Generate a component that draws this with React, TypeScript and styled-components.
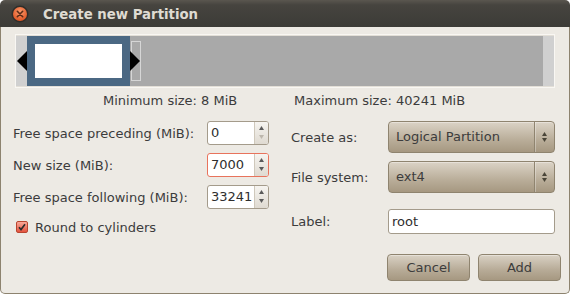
import React from "react";
import styled, { createGlobalStyle } from "styled-components";

const GlobalStyle = createGlobalStyle`
  html, body {
    margin: 0;
    padding: 0;
    background: #ffffff;
  }
  body {
    font-family: "DejaVu Sans", "Liberation Sans", sans-serif;
    font-size: 13px;
    color: #3c3c3c;
  }
`;

const Window = styled.div`
  width: 570px;
  height: 294px;
  display: flex;
  flex-direction: column;
`;

const TitleBar = styled.div`
  height: 27px;
  flex: none;
  display: flex;
  align-items: center;
  gap: 14px;
  padding-left: 11px;
  background: linear-gradient(#5a564f 0, #46443f 5px, #3c3b37 100%);
  border-radius: 5px 5px 0 0;
`;

const Title = styled.span`
  font-weight: bold;
  font-size: 13.3px;
  color: #dfdbd2;
  padding-top: 1px;
`;

const Body = styled.div`
  flex: 1;
  display: flex;
  flex-direction: column;
  padding-top: 7px;
  background: #edeae4;
  border: 1px solid #8d836f;
  border-top: none;
  border-radius: 0 0 5px 5px;
`;

const Frame = styled.div`
  margin: 0 14px;
  height: 54px;
  box-sizing: border-box;
  border: 1px solid #f9f7f3;
  padding: 1px 1px 1px 0;
  background: #e3dfd7;
`;

const SizesRow = styled.div`
  display: flex;
  margin-top: 5px;
  padding-left: 102px;
  line-height: 16px;
`;

const SizeText = styled.span<{ $width?: number }>`
  width: ${(p) => (p.$width ? `${p.$width}px` : "auto")};
`;

const Columns = styled.div`
  display: grid;
  grid-template-columns: 278px 1fr;
  margin-top: 12px;
  padding-left: 12px;
`;

const LeftGrid = styled.div`
  display: grid;
  grid-template-columns: 194px 62px;
  grid-auto-rows: 24px;
  row-gap: 8px;
  align-content: start;
`;

const RightGrid = styled.div`
  display: grid;
  grid-template-columns: 97px 167px;
  row-gap: 8px;
  align-content: start;
`;

const Label = styled.label<{ $offset?: number }>`
  align-self: center;
  white-space: nowrap;
  margin-top: ${(p) => p.$offset ?? 0}px;
`;

const Spin = styled.div<{ $focus?: boolean }>`
  display: flex;
  box-sizing: border-box;
  height: 24px;
  background: #ffffff;
  border: 1px solid ${(p) => (p.$focus ? "#e8735c" : "#a49b8b")};
  border-radius: 3px;
  overflow: hidden;
`;

const SpinValue = styled.span`
  flex: 1;
  padding-left: 3px;
  line-height: 22px;
  color: #2e2e2e;
`;

const SpinButtons = styled.div`
  width: 13px;
  display: flex;
  align-items: center;
  justify-content: center;
  background: linear-gradient(#f6f4f0, #dfdad1);
  border-left: 1px solid #cfc8bb;
`;

const CheckRow = styled.div`
  grid-column: 1 / span 2;
  display: flex;
  align-items: center;
  gap: 7px;
  padding-left: 3px;
  margin-top: -4px;
`;

const CheckBox = styled.span`
  width: 12px;
  height: 12px;
  box-sizing: border-box;
  display: flex;
  align-items: center;
  justify-content: center;
  border: 1px solid #b9452f;
  border-radius: 2px;
  background: linear-gradient(#f9a999, #e4543f);
`;

const Combo = styled.div`
  display: flex;
  box-sizing: border-box;
  height: 32px;
  border: 1px solid #8f846f;
  border-radius: 4px;
  background: linear-gradient(#dbd3c6, #b9ad99 60%, #a69881);
  box-shadow: inset 0 1px 0 rgba(255, 255, 255, 0.35);
`;

const ComboValue = styled.span`
  flex: 1;
  padding-left: 7px;
  line-height: 30px;
  color: #3c3c3c;
`;

const ComboArrows = styled.div`
  width: 19px;
  display: flex;
  align-items: center;
  justify-content: center;
  border-left: 1px solid #8f846f;
  box-shadow: inset 1px 0 0 rgba(255, 255, 255, 0.3);
`;

const Entry = styled.div`
  box-sizing: border-box;
  height: 25px;
  margin-top: 8px;
  padding-left: 3px;
  line-height: 23px;
  background: #ffffff;
  border: 1px solid #a49b8b;
  border-radius: 3px;
  color: #2e2e2e;
`;

const ButtonRow = styled.div`
  grid-column: 1 / span 2;
  width: 270px;
  display: flex;
  justify-content: flex-end;
  gap: 8px;
  margin-top: 12px;
`;

const Button = styled.button`
  width: 83px;
  height: 27px;
  font-family: inherit;
  font-size: 13px;
  color: #3c3c3c;
  border: 1px solid #8f846f;
  border-radius: 4px;
  background: linear-gradient(#d9d1c4, #b7ab97 60%, #a69881);
  box-shadow: inset 0 1px 0 rgba(255, 255, 255, 0.35);
  padding: 0;
`;

function CloseIcon() {
  return (
    <svg width="18" height="18" viewBox="0 0 18 18">
      <defs>
        <radialGradient id="cg" cx="50%" cy="35%" r="65%">
          <stop offset="0" stopColor="#fb9a6c" />
          <stop offset="1" stopColor="#df5423" />
        </radialGradient>
      </defs>
      <circle cx="9" cy="9" r="8.5" fill="#2f2e2a" />
      <circle cx="9" cy="9" r="7" fill="url(#cg)" />
      <path d="M6.3 6.3 L11.7 11.7 M11.7 6.3 L6.3 11.7" stroke="#5a2b17" strokeWidth="1.6" strokeLinecap="round" />
    </svg>
  );
}

function PartitionBar() {
  return (
    <svg width="538" height="50" viewBox="0 0 538 50">
      <rect x="0" y="0" width="538" height="50" fill="#a9a9a9" />
      <rect x="0" y="0" width="11" height="50" fill="#d0d0d0" />
      <rect x="527" y="0" width="11" height="50" fill="#d0d0d0" />
      <rect x="11" y="0" width="103" height="50" fill="#4b6883" />
      <rect x="19" y="8" width="87" height="34" fill="#ffffff" />
      <rect x="115.5" y="5.5" width="9" height="39" fill="none" stroke="#d6d6d6" />
      <polygon points="1,25 11,15 11,35" fill="#000000" />
      <polygon points="124,25 114,15 114,35" fill="#000000" />
    </svg>
  );
}

function SpinArrows({ downDisabled }: { downDisabled?: boolean }) {
  return (
    <svg width="7" height="20" viewBox="0 0 7 20">
      <polygon points="3.5,3 6,7 1,7" fill="#5a5a5a" />
      <polygon points="3.5,16 6,12 1,12" fill={downDisabled ? "#bdb7ad" : "#5a5a5a"} />
    </svg>
  );
}

function ComboArrowIcon() {
  return (
    <svg width="7" height="14" viewBox="0 0 7 14">
      <polygon points="3.5,2 6,6 1,6" fill="#4a4538" />
      <polygon points="3.5,12 6,8 1,8" fill="#4a4538" />
    </svg>
  );
}

function CheckMark() {
  return (
    <svg width="10" height="10" viewBox="0 0 10 10">
      <path d="M2 5.2 L4 7.6 L8 2.2" fill="none" stroke="#2b2b2b" strokeWidth="1.6" />
    </svg>
  );
}

export default function App() {
  return (
    <>
      <GlobalStyle />
      <Window>
        <TitleBar>
          <CloseIcon />
          <Title>Create new Partition</Title>
        </TitleBar>
        <Body>
          <Frame>
            <PartitionBar />
          </Frame>
          <SizesRow>
            <SizeText $width={191}>Minimum size: 8 MiB</SizeText>
            <SizeText>Maximum size: 40241 MiB</SizeText>
          </SizesRow>
          <Columns>
            <LeftGrid>
              <Label>Free space preceding (MiB):</Label>
              <Spin>
                <SpinValue>0</SpinValue>
                <SpinButtons>
                  <SpinArrows downDisabled />
                </SpinButtons>
              </Spin>
              <Label>New size (MiB):</Label>
              <Spin $focus>
                <SpinValue>7000</SpinValue>
                <SpinButtons>
                  <SpinArrows />
                </SpinButtons>
              </Spin>
              <Label>Free space following (MiB):</Label>
              <Spin>
                <SpinValue>33241</SpinValue>
                <SpinButtons>
                  <SpinArrows />
                </SpinButtons>
              </Spin>
              <CheckRow>
                <CheckBox>
                  <CheckMark />
                </CheckBox>
                <span>Round to cylinders</span>
              </CheckRow>
            </LeftGrid>
            <RightGrid>
              <Label>Create as:</Label>
              <Combo>
                <ComboValue>Logical Partition</ComboValue>
                <ComboArrows>
                  <ComboArrowIcon />
                </ComboArrows>
              </Combo>
              <Label>File system:</Label>
              <Combo>
                <ComboValue>ext4</ComboValue>
                <ComboArrows>
                  <ComboArrowIcon />
                </ComboArrows>
              </Combo>
              <Label $offset={8}>Label:</Label>
              <Entry>root</Entry>
              <ButtonRow>
                <Button>Cancel</Button>
                <Button>Add</Button>
              </ButtonRow>
            </RightGrid>
          </Columns>
        </Body>
      </Window>
    </>
  );
}
